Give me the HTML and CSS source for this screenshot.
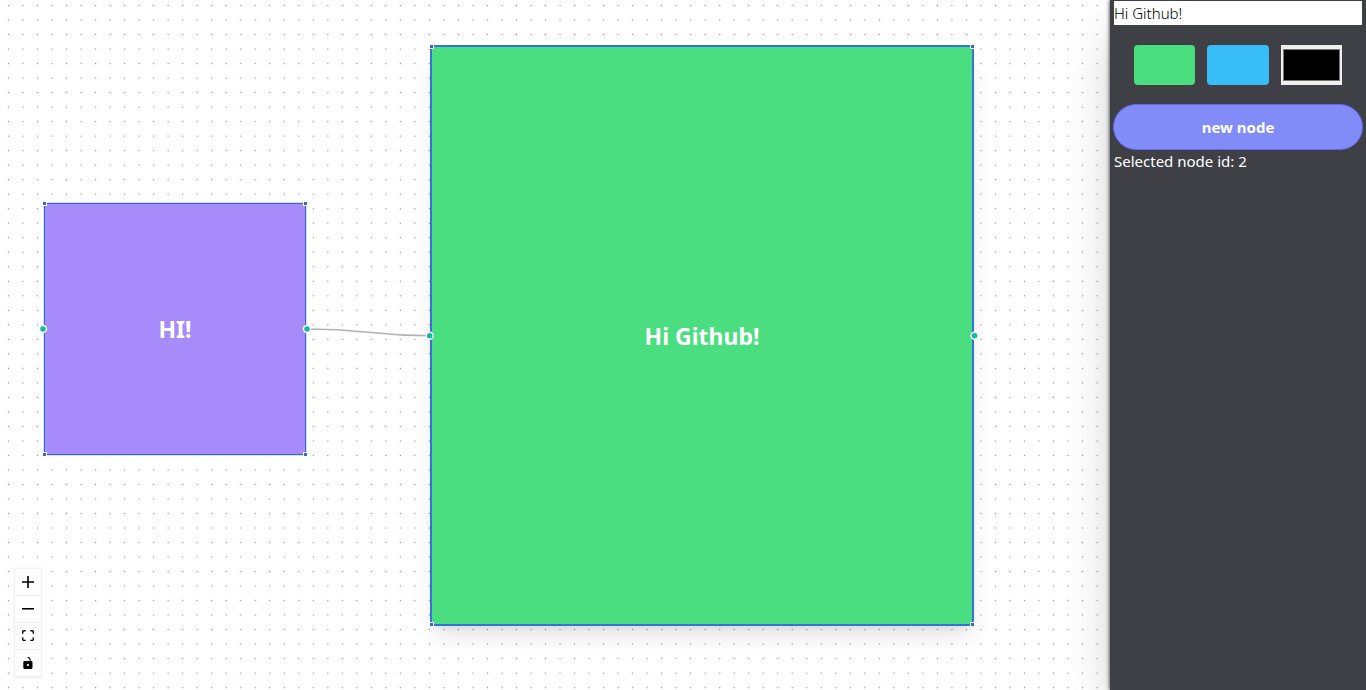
FILE: index.html
```
<!DOCTYPE html>
<html lang="en">
<head>
<meta charset="utf-8">
<meta name="viewport" content="width=device-width, initial-scale=1">
<title>Node editor</title>
<link rel="stylesheet" href="styles.css">
</head>
<body>
<div class="app">
  <main class="canvas">
    <svg class="layer" aria-hidden="true">
      <defs>
        <pattern id="dots" x="1.25" y="-1.75" width="14.514" height="14.514" patternUnits="userSpaceOnUse">
          <circle cx="7.257" cy="7.257" r="0.73" fill="#91919a"/>
        </pattern>
      </defs>
      <rect width="100%" height="100%" fill="url(#dots)"/>
    </svg>
    <section class="node node-small">
      <span>HI!</span>
      <i class="corner tl"></i><i class="corner tr"></i><i class="corner bl"></i><i class="corner br"></i>
    </section>
    <section class="node node-large">
      <span>Hi Github!</span>
      <i class="corner tl"></i><i class="corner tr"></i><i class="corner bl"></i><i class="corner br"></i>
    </section>
    <svg class="layer" aria-hidden="true">
      <path d="M307 329C368 329 368 335.700 430 335.700" fill="none" stroke="#b1b1b7" stroke-width="1.450"/>
      <g fill="#14b8a6" stroke="#fff" stroke-width="1.450">
        <circle cx="43" cy="329" r="3.500"/>
        <circle cx="307" cy="329" r="3.500"/>
        <circle cx="429.700" cy="335.700" r="3.500"/>
        <circle cx="974.600" cy="335.700" r="3.500"/>
      </g>
    </svg>
    <div class="controls">
      <button type="button" aria-label="zoom in"><svg viewBox="0 0 32 32"><path d="M32 18.133H18.133V32h-4.266V18.133H0v-4.266h13.867V0h4.266v13.867H32z"/></svg></button>
      <button type="button" aria-label="zoom out"><svg viewBox="0 0 32 5"><path d="M0 0h32v4.200H0z"/></svg></button>
      <button type="button" aria-label="fit view"><svg viewBox="0 0 32 30"><path d="M3.692 4.630c0-.530.400-.938.939-.938h5.215V0H4.708C2.130 0 0 2.054 0 4.630v5.216h3.692V4.631zM27.354 0h-5.200v3.692h5.170c.530 0 .984.400.984.939v5.215H32V4.631A4.624 4.624 0 0 0 27.354 0zm.954 24.830c0 .532-.400.940-.939.940h-5.215v3.768h5.215c2.577 0 4.631-2.130 4.631-4.707v-5.139h-3.692v5.139zm-23.677.940a.919.919 0 0 1-.939-.940v-5.138H0v5.139c0 2.577 2.130 4.707 4.708 4.707h5.138V25.770H4.631z"/></svg></button>
      <button type="button" aria-label="toggle interactivity"><svg viewBox="0 0 25 32"><path d="M21.333 10.667H19.810V7.619C19.810 3.429 16.380 0 12.190 0c-4.114 1.828-1.370 2.133.305 2.438 1.676.305 4.420 2.590 4.420 5.181v3.048H3.047A3.056 3.056 0 0 0 0 13.714v15.238A3.056 3.056 0 0 0 3.048 32h18.285a3.056 3.056 0 0 0 3.048-3.048V13.714a3.056 3.056 0 0 0-3.048-3.047zM12.190 24.533a3.056 3.056 0 0 1-3.047-3.047 3.056 3.056 0 0 1 3.047-3.048 3.056 3.056 0 0 1 3.048 3.048 3.056 3.056 0 0 1-3.048 3.047z"/></svg></button>
    </div>
  </main>
  <aside class="sidebar">
    <input class="label-input" type="text" value="Hi Github!" aria-label="Node label">
    <div class="swatches">
      <button type="button" class="swatch green" aria-label="Green"></button>
      <button type="button" class="swatch blue" aria-label="Blue"></button>
      <input type="color" class="picker" value="#000000" aria-label="Custom color">
    </div>
    <button type="button" class="new-node">new node</button>
    <p class="status">Selected node id: 2</p>
  </aside>
</div>
</body>
</html>
```
FILE: styles.css
```
* { box-sizing: border-box; }
body {
  margin: 0;
  font-family: "Segoe UI", "Noto Sans", sans-serif;
  font-size: 15px;
  line-height: 24px;
}
button, input { margin: 0; padding: 0; border: 0; font: inherit; }
.app { display: flex; height: 100vh; overflow: hidden; }
.canvas { position: relative; flex: 1; min-width: 0; background: #fff; }
.layer { position: absolute; inset: 0; width: 100%; height: 100%; pointer-events: none; }

.node {
  position: absolute;
  display: flex;
  align-items: center;
  justify-content: center;
  color: #fff;
  font-size: 23px;
  font-weight: 700;
  border: 1px solid #3367d9;
}
.node-small {
  left: 44px; top: 203px; width: 262px; height: 252px;
  background: #a78bfa;
  box-shadow: 0 0 0 1px #d3e0f8;
}
.node-large {
  left: 430px; top: 45px; width: 544px; height: 581px;
  background: #4ade80;
  border-width: 2px;
  border-color: #3572df;
  box-shadow: 0 15px 22px -4px rgba(0, 0, 0, .1), 0 6px 9px -6px rgba(0, 0, 0, .1);
}
.corner { position: absolute; width: 5px; height: 5px; background: #3367d9; border: 1px solid #fff; }
.tl { left: -3px; top: -3px; }
.tr { right: -3px; top: -3px; }
.bl { left: -3px; bottom: -3px; }
.br { right: -3px; bottom: -3px; }

.controls {
  position: absolute;
  left: 15px;
  bottom: 13px;
  display: flex;
  flex-direction: column;
  box-shadow: 0 0 2px 1px rgba(0, 0, 0, .08);
}
.controls button {
  display: flex;
  align-items: center;
  justify-content: center;
  width: 26px;
  height: 27px;
  background: #fefefe;
  border-bottom: 1px solid #eee;
}
.controls svg { width: 12px; max-height: 12px; }

.sidebar {
  position: relative;
  display: flex;
  flex-direction: column;
  width: 256px;
  padding: 1px 3px;
  background: #3f4046;
  color: #fff;
  box-shadow: 0 0 4px rgba(0, 0, 0, .9), 0 25px 50px -12px rgba(0, 0, 0, .3);
}
.label-input { height: 24px; margin: 0 1px; background: #fff; color: #000; font-weight: 300; border-radius: 0; }
.swatches { display: flex; gap: 12px; padding: 20px 21px; }
.swatch, .picker { flex: 1; min-width: 0; height: 40px; }
.swatch { border-radius: 4px; }
.green { background: #4ade80; }
.blue { background: #38bdf8; }
.picker { background: #efefef; }
.new-node {
  height: 46px;
  margin-top: -1px;
  background: #818cf8;
  color: #fff;
  border: 1px solid #6366f1;
  border-radius: 23px;
  font-weight: 700;
}
.status { margin: 0 1px; line-height: 22px; }
```
